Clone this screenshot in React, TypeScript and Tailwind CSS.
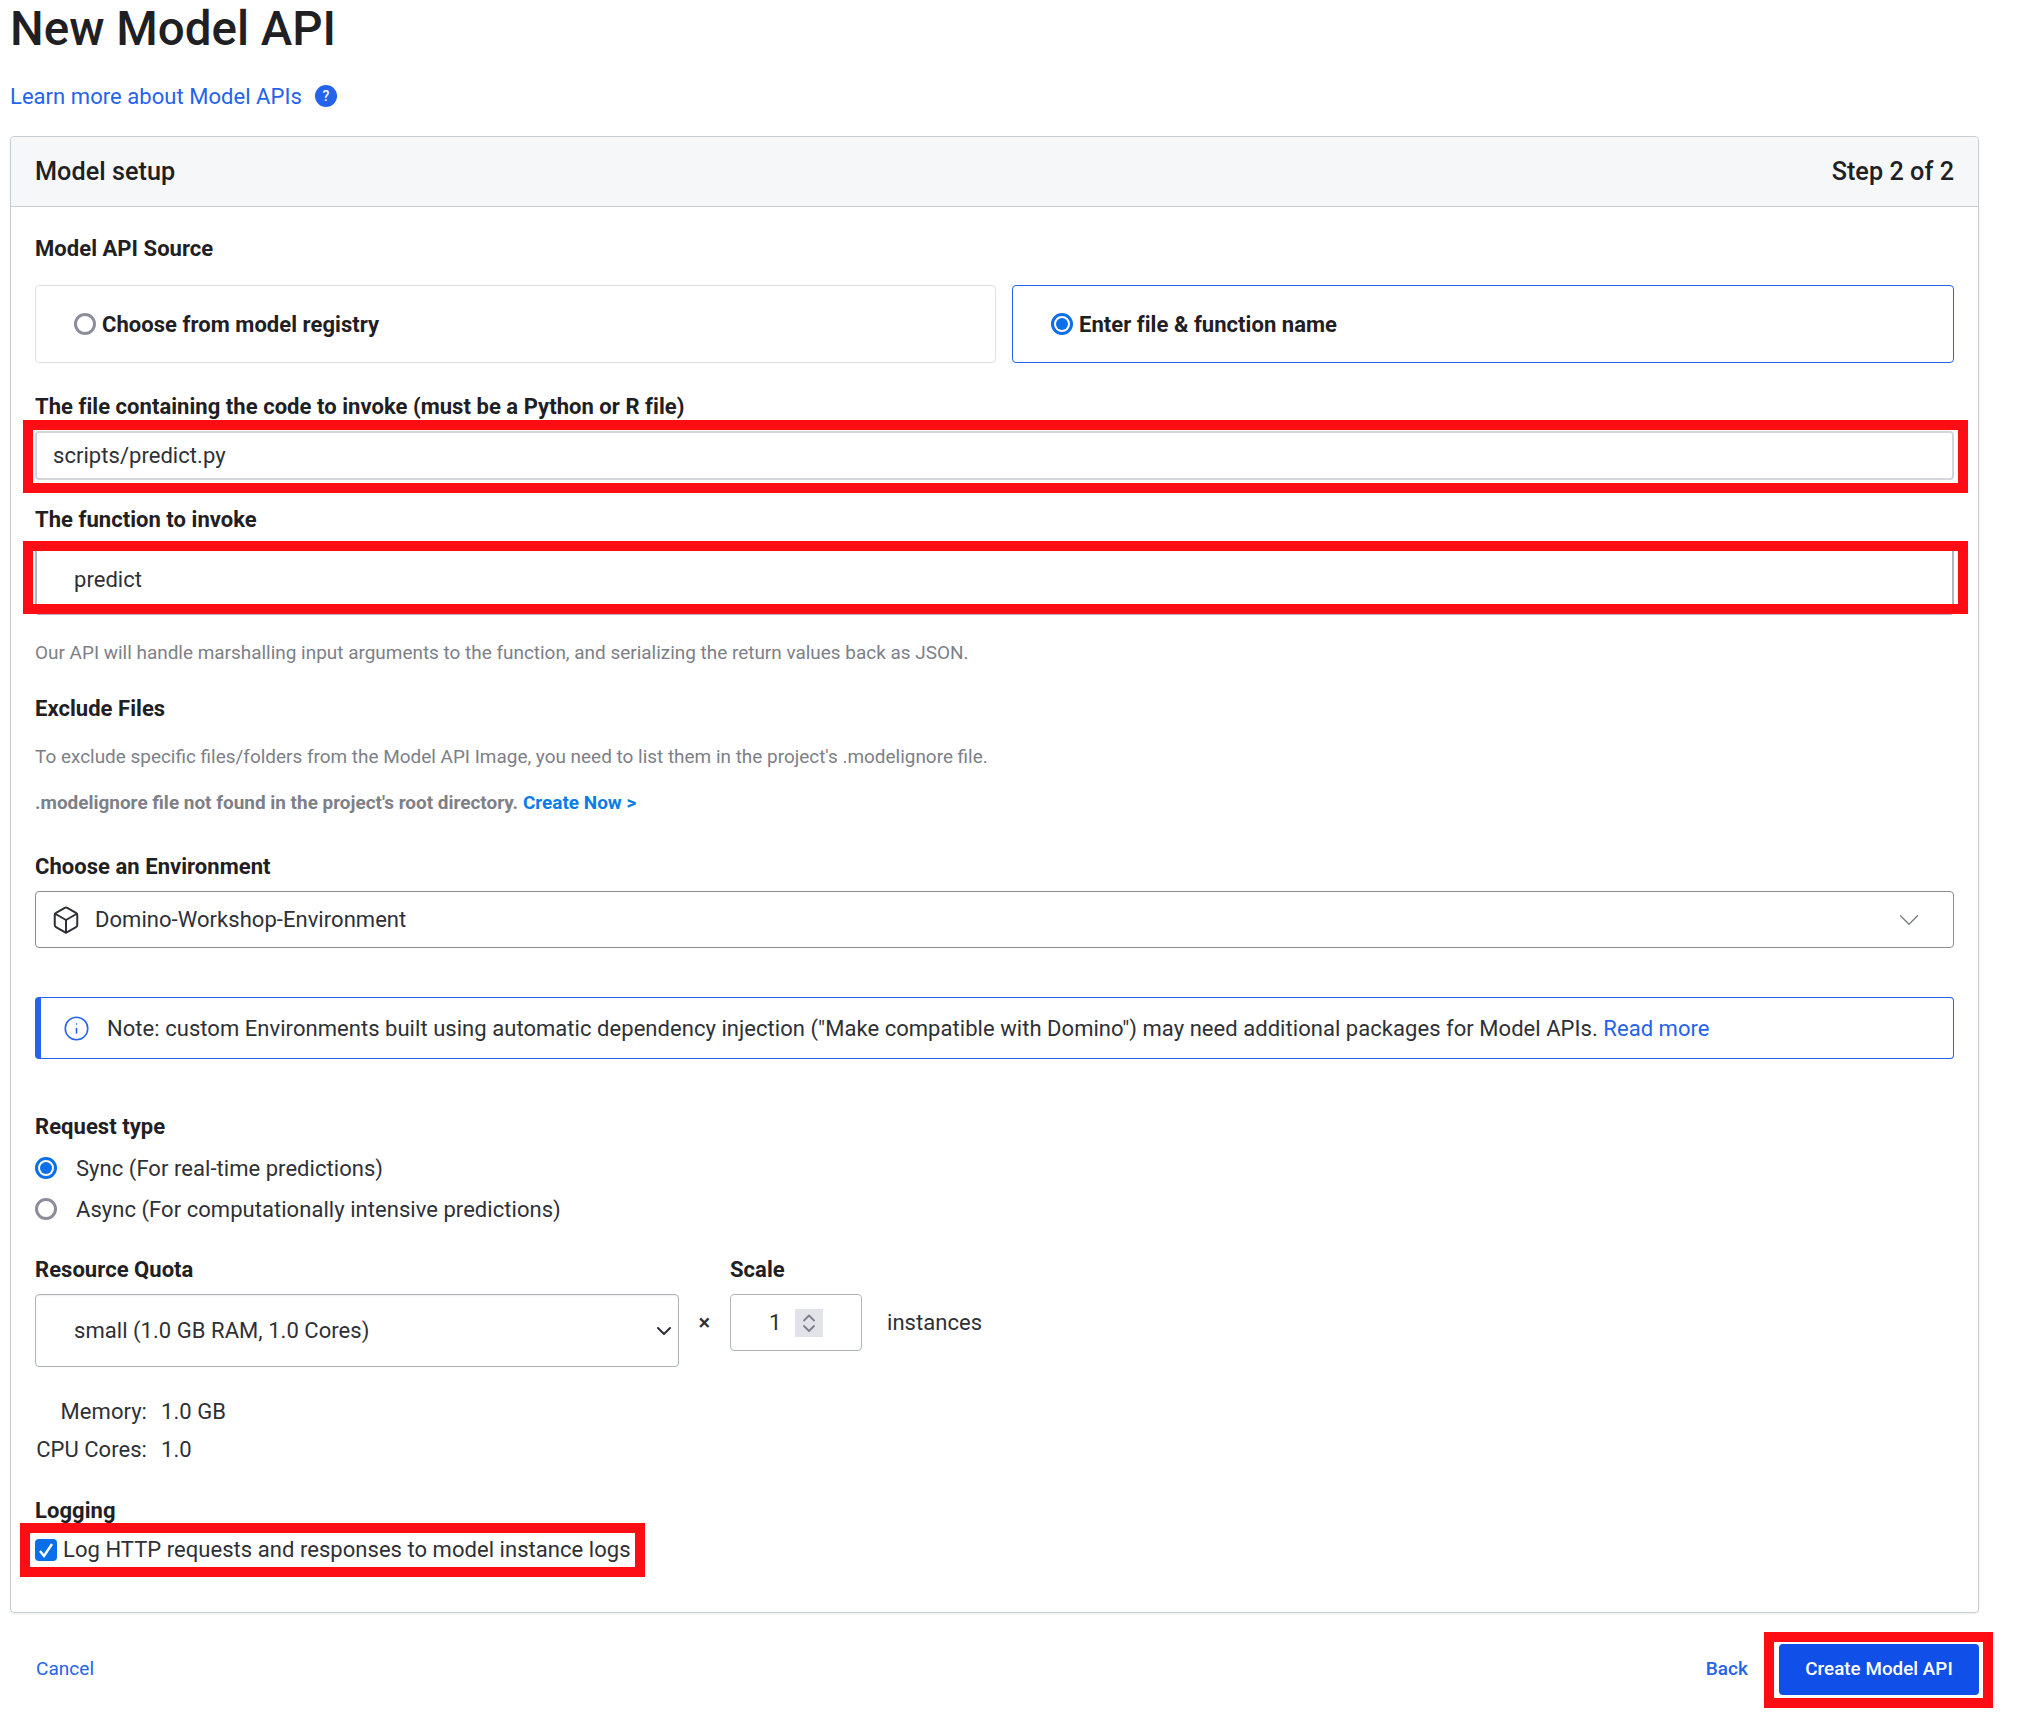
import { Box, ChevronDown, Info } from "lucide-react"

const Label = ({ children, className = "" }: { children: React.ReactNode; className?: string }) => (
  <div className={`h-[30px] flex items-center text-[22px] font-bold text-[#1f2023] ${className}`}>{children}</div>
)

const Radio = ({ checked }: { checked?: boolean }) =>
  checked ? (
    <span className="w-[22px] h-[22px] shrink-0 rounded-full border-[3px] border-[#0a6fe8] flex items-center justify-center">
      <span className="w-[12px] h-[12px] rounded-full bg-[#0a6fe8]" />
    </span>
  ) : (
    <span className="w-[22px] h-[22px] shrink-0 rounded-full border-[3px] border-[#8b8d9c]" />
  )

const RedBox = ({ className }: { className: string }) => (
  <div className={`absolute border-[10px] border-[#ff0d14] pointer-events-none ${className}`} />
)

export default function App() {
  return (
    <div className="w-[2024px] h-[1714px] bg-white overflow-hidden pl-[10px] font-['Roboto',sans-serif] text-[22px] tracking-[0.045px] text-[#2e3036]">
      <h1 className="h-[56px] pt-[3px] flex items-center text-[47.5px] font-medium tracking-normal text-[#1f2023]">New Model API</h1>
      <div className="mt-[24px] h-[32px] flex items-center text-[#2563eb]">
        <a>Learn more about Model APIs</a>
        <span className="ml-[13px] w-[22px] h-[22px] rounded-full bg-[#2563eb] text-white text-[14px] font-medium flex items-center justify-center">?</span>
      </div>

      <div className="mt-[24px] w-[1969px] rounded-[4px] border border-[#c8ced6] shadow-[0_1px_2px_rgba(0,0,0,0.08)]">
        <div className="h-[70px] bg-[#f6f7f9] border-b border-[#c8ced6] rounded-t-[4px] px-[24px] flex items-center justify-between text-[25.2px] font-medium text-[#1f2023]">
          <span>Model setup</span>
          <span>Step 2 of 2</span>
        </div>

        <div className="px-[24px] pt-[26px] pb-[46px]">
          <Label>Model API Source</Label>
          <div className="mt-[22px] flex gap-[16px]">
            <div className="w-[961px] h-[78px] rounded-[4px] border border-[#dcdfe4] pl-[38px] flex items-center gap-[6px] font-bold text-[#1f2023]">
              <Radio />
              Choose from model registry
            </div>
            <div className="flex-1 h-[78px] rounded-[4px] border border-[#2563eb] pl-[38px] flex items-center gap-[6px] font-bold text-[#1f2023]">
              <Radio checked />
              Enter file &amp; function name
            </div>
          </div>

          <Label className="mt-[28px]">The file containing the code to invoke (must be a Python or R file)</Label>
          <div className="relative mt-[10px] h-[49px] rounded-[4px] border-2 border-[#d3d5d8] pl-[16px] flex items-center">
            scripts/predict.py
            <RedBox className="-left-[14px] -right-[16px] -top-[13px] -bottom-[15px]" />
          </div>

          <Label className="mt-[24px]">The function to invoke</Label>
          <div className="relative mt-[9px] h-[72px] rounded-[4px] border-2 border-[#b4b6b9] pl-[37px] flex items-center">
            predict
            <RedBox className="-left-[14px] -right-[16px] -top-[4px] -bottom-[1px]" />
          </div>

          <p className="mt-[25px] h-[24px] pt-[2px] flex items-center text-[18.95px] tracking-normal text-[#7d8087]">
            Our API will handle marshalling input arguments to the function, and serializing the return values back as JSON.
          </p>

          <Label className="mt-[29px]">Exclude Files</Label>
          <p className="mt-[21px] h-[24px] pt-[2px] flex items-center text-[18.95px] tracking-normal text-[#7d8087]">
            To exclude specific files/folders from the Model API Image, you need to list them in the project's .modelignore file.
          </p>
          <p className="mt-[22px] h-[24px] pt-[2px] flex items-center text-[18.95px] tracking-normal font-bold text-[#7d8087]">
            .modelignore file not found in the project's root directory.
            <a className="ml-[5px] text-[#0a7cea]">Create Now &gt;</a>
          </p>

          <Label className="mt-[37px]">Choose an Environment</Label>
          <div className="mt-[10px] h-[57px] rounded-[4px] border border-[#8a8c90] pl-[15px] pr-[27px] flex items-center">
            <Box className="w-[30px] h-[30px] text-[#2e3036]" strokeWidth={1.6} />
            <span className="ml-[14px]">Domino-Workshop-Environment</span>
            <ChevronDown className="ml-auto w-[34px] h-[34px] text-[#7a7c83]" strokeWidth={0.9} />
          </div>

          <div className="mt-[49px] h-[62px] rounded-[4px] border border-[#2563eb] border-l-[6px] pl-[22px] flex items-center">
            <Info className="w-[27px] h-[27px] text-[#2563eb]" strokeWidth={1.4} />
            <span className="ml-[17px]">
              Note: custom Environments built using automatic dependency injection ("Make compatible with Domino") may need additional packages for Model APIs.{" "}
              <a className="text-[#2563eb]">Read more</a>
            </span>
          </div>

          <Label className="mt-[52px]">Request type</Label>
          <div className="mt-[11px] h-[32px] flex items-center gap-[19px]">
            <Radio checked />
            Sync (For real-time predictions)
          </div>
          <div className="mt-[9px] h-[32px] flex items-center gap-[19px]">
            <Radio />
            Async (For computationally intensive predictions)
          </div>

          <div className="mt-[29px] flex items-start">
            <div className="w-[644px]">
              <Label>Resource Quota</Label>
              <div className="mt-[10px] h-[73px] rounded-[4px] border border-[#b0b3b8] pl-[38px] pr-[2px] flex items-center shadow-[inset_0_1px_2px_rgba(0,0,0,0.08)]">
                small (1.0 GB RAM, 1.0 Cores)
                <ChevronDown className="ml-auto w-[24px] h-[24px] text-[#2e3036]" strokeWidth={2} />
              </div>
            </div>
            <div className="w-[51px] mt-[40px] h-[56px] flex items-center justify-center font-medium text-[#2e3036]">×</div>
            <div className="w-[132px]">
              <Label>Scale</Label>
              <div className="mt-[10px] h-[57px] rounded-[4px] border border-[#b0b3b8] pl-[38px] flex items-center">
                <span className="w-[26px]">1</span>
                <span className="w-[28px] h-[28px] bg-[#e2e3e8] flex items-center justify-center">
                  <svg viewBox="0 0 28 28" className="w-[28px] h-[28px]" fill="none" stroke="#7d7f8c" strokeWidth="1.8" strokeLinecap="round" strokeLinejoin="round">
                    <path d="M9 11.5 L14 6.5 L19 11.5" />
                    <path d="M9 17 L14 22 L19 17" />
                  </svg>
                </span>
              </div>
            </div>
            <div className="ml-[25px] mt-[40px] h-[56px] flex items-center">instances</div>
          </div>

          <div className="mt-[28px] h-[32px] flex items-center">
            <span className="w-[112px] text-right">Memory:</span>
            <span className="ml-[14px]">1.0 GB</span>
          </div>
          <div className="mt-[6px] h-[32px] flex items-center">
            <span className="w-[112px] text-right">CPU Cores:</span>
            <span className="ml-[14px]">1.0</span>
          </div>

          <Label className="mt-[30px]">Logging</Label>
          <div className="relative mt-[9px] w-[600px] h-[32px] flex items-center gap-[6px]">
            <span className="w-[22px] h-[22px] rounded-[4px] bg-[#0a6fe8] flex items-center justify-center">
              <svg viewBox="0 0 22 22" className="w-[22px] h-[22px]" fill="none" stroke="white" strokeWidth="2.4">
                <path d="M5 12 L9 17 L17 5" />
              </svg>
            </span>
            <span className="-mt-[2px]">Log HTTP requests and responses to model instance logs</span>
            <RedBox className="-left-[15px] w-[625px] -top-[11px] -bottom-[11px]" />
          </div>
        </div>
      </div>

      <div className="mt-[31px] w-[1969px] h-[51px] flex items-center pl-[26px] text-[19px] text-[#2563eb]">
        <a>Cancel</a>
        <a className="ml-auto font-medium">Back</a>
        <div className="relative ml-[31px] w-[200px] h-[51px]">
          <button className="w-full h-full rounded-[4px] bg-[#1150e8] text-white text-[18.8px] font-medium">Create Model API</button>
          <RedBox className="-left-[15px] -right-[14px] -top-[12px] -bottom-[13px]" />
        </div>
      </div>
    </div>
  )
}
